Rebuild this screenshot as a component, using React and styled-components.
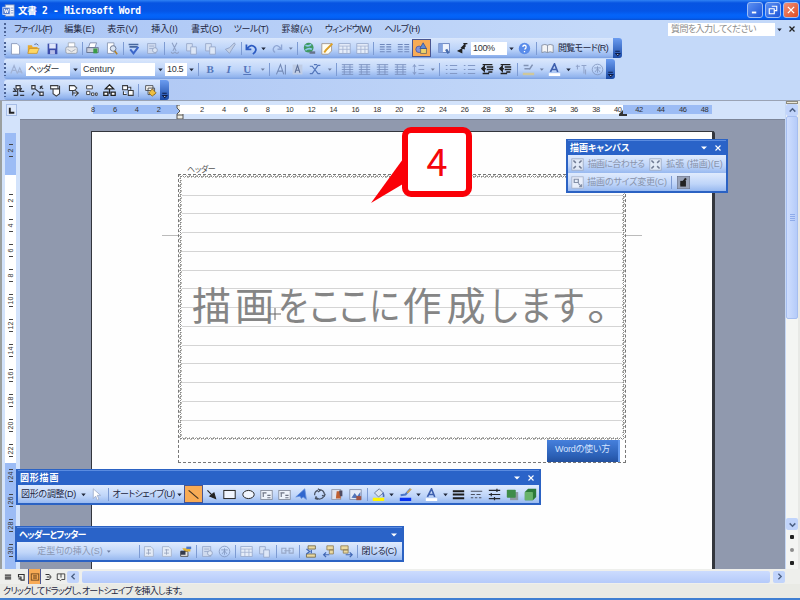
import React from "react";
import styled, { createGlobalStyle } from "styled-components";

const GlobalStyle = createGlobalStyle`
  body {
    margin: 0;
    overflow: hidden;
    font-family: "Liberation Sans", "Noto Sans CJK JP", sans-serif;
  }
  * {
    box-sizing: border-box;
  }
`;

const Window = styled.div`
  width: 800px;
  height: 600px;
  display: flex;
  flex-direction: column;
  background: #c3d8f8;
  border-bottom: 2px solid #3f7fd2;
  overflow: hidden;
`;

const TitleBar = styled.div`
  height: 20px;
  flex: none;
  display: flex;
  align-items: center;
  padding: 0 1px 0 2px;
  background: linear-gradient(#2f82f4 0, #0754e2 3px, #0555e6 11px, #0464fa 15px, #0360f5 18px, #0a4fd0 20px);
`;
const TitleText = styled.div`
  flex: 1;
  margin-left: 3px;
  color: #fff;
  font-family: "DejaVu Sans Mono", "Noto Sans CJK JP", monospace;
  font-size: 9.6px;
  font-weight: bold;
  letter-spacing: -0.3px;
  white-space: pre;
`;
const WinButton = styled.div`
  width: 16px;
  height: 16px;
  margin-left: 2px;
  display: flex;
  align-items: center;
  justify-content: center;
  border: 1px solid #9dbdf5;
  border-radius: 3px;
  background: ${(props) => (props.$close ? "linear-gradient(135deg, #f0917a, #dd4b22)" : "linear-gradient(135deg, #5c90f2, #1c55d8)")};
`;

const MenuBar = styled.div`
  height: 18px;
  flex: none;
  display: flex;
  align-items: center;
  padding: 0 4px;
  background: linear-gradient(90deg, #aac5f5, #c4d9f9 75%);
`;
const Label = styled.div`
  width: ${(props) => props.$w}px;
  flex: none;
  display: flex;
  justify-content: ${(props) => (props.$left ? "flex-start" : "center")};
  color: ${(props) => props.$color || "#1d2640"};
  font-size: ${(props) => props.$size || 9}px;
  font-weight: ${(props) => (props.$bold ? "bold" : "normal")};
  letter-spacing: ${(props) => props.$ls || 0}px;
  font-feature-settings: "palt";
  line-height: 14px;
  white-space: pre;
`;
const Question = styled.div`
  width: 107px;
  height: 13px;
  padding-left: 3px;
  background: #fff;
  color: #8c8c8c;
  font-size: 9px;
  letter-spacing: -0.6px;
  line-height: 12px;
  white-space: nowrap;
  font-feature-settings: "palt";
`;

const Docks = styled.div`
  height: 63px;
  flex: none;
  display: flex;
  flex-direction: column;
  align-items: flex-start;
  gap: 1px;
  padding-left: 4px;
  background: linear-gradient(90deg, #abc4f3, #c4d9f9 75%);
  border-bottom: 1px solid #9aa3b4;
`;
const Strip = styled.div`
  height: 20px;
  display: flex;
  align-items: center;
  border-radius: 3px;
  background: linear-gradient(#dae7fc, #bdd4f9 55%, #92b4ee 90%, #7a9fe0);
`;
const Cell = styled.div`
  width: ${(props) => props.$w}px;
  height: ${(props) => (props.$on ? "18px" : "auto")};
  flex: none;
  display: flex;
  align-items: center;
  justify-content: center;
  background: ${(props) => (props.$on ? "#f8ab55" : "none")};
  border: ${(props) => (props.$on ? "1px solid #4a5590" : "none")};
`;
const Grip = styled.div`
  width: 2px;
  height: 13px;
  flex: none;
  background: repeating-linear-gradient(#4c6395 0 2px, transparent 2px 4px);
`;
const EndCap = styled.div`
  width: 9px;
  height: 20px;
  margin-left: ${(props) => props.$gap || 0}px;
  display: flex;
  align-items: flex-end;
  justify-content: center;
  border-radius: 0 3px 3px 0;
  background: linear-gradient(#6b9cf0, #1b4aa6);
`;
const Combo = styled.div`
  width: ${(props) => props.$w}px;
  height: 13px;
  flex: none;
  padding-left: 2px;
  background: #fff;
  color: #30343c;
  font-size: 9px;
  letter-spacing: ${(props) => props.$ls || 0}px;
  line-height: 12px;
  white-space: nowrap;
  font-feature-settings: "palt";
`;

const Middle = styled.div`
  flex: 1;
  min-height: 0;
  display: flex;
`;
const LeftColumn = styled.div`
  width: 20px;
  flex: none;
  display: flex;
  flex-direction: column;
  padding-left: 5px;
  background: #d3e3fb;
  border-left: 2px solid #9ba09f;
`;
const TabStop = styled.div`
  width: 11px;
  height: 12px;
  margin: 3px 0 17px -1px;
  display: flex;
  align-items: center;
  justify-content: center;
  background: #dce8fb;
  border: 1px solid #a6bde6;
`;
const VRuler = styled.div`
  width: 11px;
  height: ${(props) => props.$h}px;
  margin-left: -2px;
  flex: none;
  padding-top: ${(props) => props.$pad || 0}px;
  overflow: hidden;
  background: ${(props) => (props.$margin ? "#9cbcf5" : "#fff")};
`;
const VMark = styled.div`
  height: 25px;
  display: flex;
  flex-direction: column;
  align-items: center;
  justify-content: center;
  gap: 1px;
  color: #333;
  font-size: 7px;
  span {
    width: 9px;
    height: 9px;
    line-height: 9px;
    text-align: center;
    transform: rotate(-90deg);
  }
  i {
    width: 4px;
    height: 1px;
    background: #444;
  }
`;

const Center = styled.div`
  width: 765px;
  flex: none;
  display: flex;
  flex-direction: column;
`;
const HRulerBar = styled.div`
  height: 18px;
  flex: none;
  display: flex;
  padding: 4px 0 0 73px;
  background: #d3e3fb;
`;
const HRuler = styled.div`
  width: ${(props) => props.$w}px;
  height: 9px;
  flex: none;
  display: flex;
  padding-left: ${(props) => props.$pad || 0}px;
  background: ${(props) => (props.$margin ? "#9cbcf5" : "#fff")};
`;
const HMark = styled.div`
  width: 21.9px;
  flex: none;
  margin-left: ${(props) => props.$shift || 0}px;
  color: #333;
  font-size: 7.5px;
  letter-spacing: -0.4px;
  line-height: 10px;
  text-align: center;
`;
const RulerPin = styled.div`
  width: 0;
  height: 14px;
  display: flex;
  justify-content: center;
  svg {
    flex: none;
  }
`;

const Workspace = styled.div`
  flex: 1;
  position: relative;
  padding: 11px 0 0 71px;
  background: #9099ae;
  border-top: 1px solid #7c8598;
`;
const Page = styled.div`
  width: 624px;
  height: 438px;
  padding: 33px 70px 0;
  background: #fefefe;
  border: solid #33363d;
  border-width: 1px 3px 0 1px;
  border-radius: 0 3px 0 0;
`;
const HeaderTag = styled.div`
  height: 9px;
  padding-left: 25px;
  color: #555;
  font-size: 8px;
  letter-spacing: -0.3px;
  line-height: 10px;
  font-feature-settings: "palt";
`;
const MarginRow = styled.div`
  display: flex;
  align-items: flex-start;
`;
const MarginTick = styled.div`
  width: 17px;
  height: 1px;
  margin-top: 61px;
  background: #bbb;
`;
const HeaderBox = styled.div`
  width: 448px;
  height: 289px;
  flex: none;
  border: 1px dashed #777;
`;
const DrawCanvas = styled.div`
  height: 265px;
  padding: 17px 0 0;
  display: flex;
  flex-direction: column;
  border: 3px solid #c8c8c4;
  border-image: repeating-linear-gradient(135deg, #b9b9b5 0 1px, #fff 1px 2.5px) 3;
  background: repeating-linear-gradient(transparent 0 17.6px, #d4d4d4 17.6px 18.75px);
  background-position: 0 -1px;
  outline: 1px dotted #888;
  outline-offset: -2px;
`;
const Message = styled.div`
  height: 48px;
  margin: 84px 0 0 8px;
  display: flex;
  align-items: center;
  color: #858585;
  font-family: "Noto Sans CJK JP", sans-serif;
  font-size: 39px;
  font-feature-settings: "palt";
  line-height: 48px;
`;
const Glyph = styled.span`
  width: ${(props) => props.$w}px;
  flex: none;
  display: flex;
  justify-content: center;
  transform: scaleX(${(props) => props.$sx || 1});
`;
const GuideButton = styled.div`
  width: 73px;
  height: 22px;
  margin: 0 0 0 368px;
  color: #d5e4ff;
  background: linear-gradient(#4680dc, #2c61b7 70%, #2351a0);
  border-right: 2px solid #629af0;
  font-size: 9px;
  letter-spacing: -0.2px;
  line-height: 18px;
  text-align: center;
  font-feature-settings: "palt";
`;

const Callout = styled.div`
  position: absolute;
  left: 350px;
  top: 7px;
  width: 104px;
  height: 80px;
  display: flex;
  padding-left: 32px;
`;
const CalloutTail = styled.svg`
  position: absolute;
  left: 0;
  top: 30px;
`;
const CalloutBox = styled.div`
  width: 70px;
  height: 70px;
  background: #fff;
  border: 6px solid #fa0007;
  border-radius: 9px;
  color: #f5060b;
  font-family: "Noto Sans CJK JP", sans-serif;
  font-size: 38px;
  line-height: 53px;
  text-align: center;
`;
const CrossHair = styled.svg`
  position: absolute;
  left: 249px;
  top: 188px;
`;

const Floating = styled.div`
  position: absolute;
  left: ${(props) => props.$x}px;
  top: ${(props) => props.$y}px;
  width: ${(props) => props.$w}px;
  border: 2px solid #2b62c3;
  border-top-width: 1px;
`;
const FloatTitle = styled.div`
  height: 15px;
  display: flex;
  align-items: center;
  padding: 0 4px 0 2px;
  background: #2a63c8;
  border-top: 1px solid #5a8be0;
  svg {
    margin-left: 6px;
  }
`;
const Grow = styled.div`
  flex: 1;
`;
const FloatRow = styled.div`
  height: ${(props) => props.$h || 18}px;
  display: flex;
  align-items: center;
  background: linear-gradient(#e0ebfd, #bfd5f9 60%, #98b9f0);
`;

const RightColumn = styled.div`
  width: 15px;
  flex: none;
  display: flex;
  flex-direction: column;
  align-items: center;
  background: #f4f5f3;
  border-left: 1px solid #c6d8f5;
  border-right: 2px solid #e8e9e6;
`;
const SplitBar = styled.div`
  width: 12px;
  height: 3px;
  background: #e9e6d8;
  border: 1px solid #8e8b7e;
`;
const ScrollButton = styled.div`
  width: 12px;
  height: 12px;
  flex: none;
  display: flex;
  align-items: center;
  justify-content: center;
  background: #c1d4fb;
  border-radius: 2px;
`;
const VThumb = styled.div`
  width: 12px;
  height: 203px;
  display: flex;
  align-items: center;
  justify-content: center;
  background: linear-gradient(90deg, #cfdefe, #b5cbf9);
  border: 1px solid #a6bef0;
  border-radius: 2px;
`;
const ThumbGrip = styled.div`
  width: 5px;
  height: 7px;
  background: repeating-linear-gradient(#8fabea 0 1px, transparent 1px 2px);
`;
const VTrack = styled.div`
  flex: 1;
`;
const BrowseDot = styled.div`
  width: 4px;
  height: 4px;
  margin: 4.5px 0;
  border-radius: ${(props) => (props.$round ? "50%" : "1px")};
  background: ${(props) => (props.$round ? "#8d8d8d" : "#222")};
`;

const BottomBar = styled.div`
  height: 15px;
  flex: none;
  display: flex;
  align-items: center;
  background: #eeefec;
`;
const HThumb = styled.div`
  width: 688px;
  height: 12px;
  margin: 0 3px;
  background: linear-gradient(#ccdcfe, #b4cafa);
  border-radius: 2px;
`;
const StatusBar = styled.div`
  height: 14px;
  flex: none;
  display: flex;
  align-items: center;
  padding-left: 3px;
  background: #e9eae5;
`;

const drawings = {
  word: (
    <>
      <rect x="4" y="1" width="11" height="14" fill="#f3f6fd" stroke="#6b83b8" />
      <rect x="1" y="4" width="9" height="9" fill="#4f79cf" stroke="#dfe8fa" />
      <path d="M3 6l1.3 5 1.2-4 1.2 4L8 6" fill="none" stroke="#fff" strokeWidth="1.2" />
      <path d="M11 5h3M11 8h3M11 11h3" stroke="#7792cc" />
    </>
  ),
  page: <path d="M3 2h7l3 3v10H3z" fill="#fff" stroke="#8090b4" />,
  folder: (
    <>
      <path d="M1 4h5l1 2h6v8H1z" fill="#e8a92e" />
      <path d="M3 8h12l-3 6H1z" fill="#ffd763" stroke="#ab7920" strokeWidth=".6" />
      <path d="M9 3q3-2 5 1" stroke="#475b87" fill="none" />
    </>
  ),
  disk: (
    <>
      <rect x="2" y="2" width="12" height="13" fill="#3c4dab" />
      <rect x="4" y="2" width="8" height="6" fill="#dfe6fb" />
      <rect x="5" y="10" width="6" height="5" fill="#b5bde8" />
    </>
  ),
  mail: (
    <>
      <path d="M4 1h8v6H4z" fill="#fff" stroke="#a0a7b4" />
      <rect x="1" y="6" width="14" height="8" rx="2" fill="#e9eaec" stroke="#8f97a6" />
      <path d="M3 9l5 3 5-3" fill="none" stroke="#9ea5b3" />
    </>
  ),
  printer: (
    <>
      <path d="M5 1h8l-2 6H3z" fill="#fff" stroke="#7583a6" />
      <rect x="1" y="7" width="14" height="6" fill="#c9ceda" stroke="#5b6784" />
      <rect x="9" y="8" width="5" height="6" fill="#3a9b46" />
    </>
  ),
  preview: (
    <>
      <path d="M3 1h8v13H3z" fill="#fff" stroke="#8491ae" />
      <circle cx="10" cy="8" r="3.5" fill="#dbe6f5" stroke="#59647e" />
      <path d="M12 11l3 4" stroke="#b28227" strokeWidth="2" />
    </>
  ),
  spell: (
    <>
      <path d="M2 3h12M3 6h10" stroke="#46679f" strokeWidth="2" />
      <path d="M4 9l4 5 6-8" fill="none" stroke="#3b66ca" strokeWidth="2.4" />
    </>
  ),
  grayDoc: (
    <>
      <rect x="2" y="2" width="10" height="12" fill="#cfdaee" stroke="#98a9ca" />
      <path d="M4 5h6M4 8h6" stroke="#98a9ca" />
      <circle cx="11" cy="10" r="3" fill="#dbe5f5" stroke="#8f9fbf" />
    </>
  ),
  cut: <path d="M5 1l5 10M11 1L6 11M4 12a2 2 0 104 0M9 12a2 2 0 104 0" fill="none" stroke="#8ea0c4" strokeWidth="1.3" />,
  copy: (
    <>
      <path d="M2 2h7v9H2z" fill="#d6e1f4" stroke="#93a4c6" />
      <path d="M7 6h7v9H7z" fill="#dde7f7" stroke="#93a4c6" />
    </>
  ),
  brush: <path d="M14 1L8 7l-5 2 5 5 3-5 4-6z" fill="#c4d0e5" stroke="#8b9dc0" />,
  undo: <path d="M3 3v6h6M4 8q5-6 9-2t-2 9" fill="none" stroke="#2c5bc2" strokeWidth="2.2" />,
  redo: <path d="M13 3v6H8M12 8Q7 2 4 6t1 7" fill="none" stroke="#8fa6d4" strokeWidth="1.7" />,
  globe: (
    <>
      <circle cx="7" cy="7" r="6" fill="#3f9a62" />
      <path d="M3 4q4 2 7-1M3 10q4-3 8-1" stroke="#8fc8ea" strokeWidth="2" fill="none" />
      <path d="M8 13h7" stroke="#66728c" strokeWidth="3" />
    </>
  ),
  pencilTable: (
    <>
      <path d="M1 2h12v9l-4 4H1z" fill="#fffdf2" stroke="#9b8f85" />
      <path d="M14 2L6 10l-2 3" stroke="#dda026" strokeWidth="2.4" />
    </>
  ),
  table: (
    <>
      <rect x="1" y="2" width="14" height="12" fill="#e6edf9" stroke="#96a7ca" />
      <path d="M1 5h14M1 9h14M6 5v9M11 5v9" stroke="#a4b3d1" />
    </>
  ),
  columns: (
    <>
      <path d="M1 3h6M1 6h6M1 9h6M1 12h6M9 3h6M9 6h6M9 9h6M9 12h6" stroke="#6f87bb" strokeWidth="1.3" />
    </>
  ),
  drawing: (
    <>
      <circle cx="5" cy="9" r="4" fill="#8293d8" stroke="#4c56a0" />
      <rect x="7" y="8" width="7" height="6" fill="#eed26a" stroke="#6c6a63" />
      <path d="M10 1l4 7H6z" fill="#608bd2" stroke="#38539b" />
    </>
  ),
  docMap: (
    <>
      <rect x="1" y="2" width="13" height="11" fill="#eff4fd" stroke="#5a76b6" />
      <rect x="1" y="2" width="5" height="11" fill="#84a3df" />
      <path d="M10 9l3 5" stroke="#456aac" strokeWidth="3" />
    </>
  ),
  mark: <path d="M9 2h5M11 2v4M7 7l3-3v4zM3 11l4-2v4z" stroke="#222" strokeWidth="1.6" fill="#222" />,
  help: (
    <>
      <circle cx="8" cy="8" r="7" fill="#5a8cea" />
      <path d="M6 6q0-2 2-2t2 2-2 3M8 11v1.6" stroke="#fff" strokeWidth="1.6" fill="none" />
    </>
  ),
  book: <path d="M1 4q4-2 7 0 3-2 7 0v9q-4-2-7 0-3-2-7 0zM8 4v9" fill="#f3f4f6" stroke="#7e879a" />,
  style: <path d="M1 13L5 3l4 10M3 9h5M9 13l3-7 3 7M10 11h4" fill="none" stroke="#a0b1d3" strokeWidth="1.4" />,
  shadedA: (
    <>
      <rect x="2" y="2" width="12" height="12" fill="#bfcce4" />
      <path d="M5 12l3-9 3 9M6 9h4" fill="none" stroke="#5c6f97" strokeWidth="1.3" />
    </>
  ),
  plainA: <path d="M3 14L8 2l4 12M5 10h6M14 2v12" fill="none" stroke="#7389b5" strokeWidth="1.3" />,
  cross: <path d="M1 4h3l7 9h3M14 3h-3L4 13H1M6 2h4" fill="none" stroke="#5577bb" strokeWidth="1.5" />,
  align: <path d="M1 2h14M1 5h14M1 8h14M1 11h14M1 14h14M4 2v12M11 2v12" stroke="#7b91bf" strokeWidth="1.1" />,
  spacing: <path d="M3 2v12M1 5l2-3 2 3M1 11l2 3 2-3M8 3h7M8 8h7M8 13h7" fill="none" stroke="#7f94c0" />,
  list: <path d="M1 3h2M1 8h2M1 13h2M6 3h9M6 8h9M6 13h9" stroke="#8399c6" strokeWidth="1.3" />,
  indent: <path d="M2 2h12M7 5h8M7 8h8M2 13h8M1 7h5M4 4v6l-3-3zM9 11h5" fill="#222" stroke="#222" strokeWidth="1.7" />,
  highlight: (
    <>
      <path d="M2 3h6M3 7h6M9 8l4-6" stroke="#8092b4" strokeWidth="1.8" />
      <rect x="1" y="12" width="14" height="3" fill="#cfc79b" />
    </>
  ),
  fontA: (
    <>
      <path d="M3 11L8 1l4 10M5 8h6" fill="none" stroke="#3d5fae" strokeWidth="2" />
      <rect x="1" y="12.5" width="14" height="3.5" fill="#fff" />
    </>
  ),
  ruby: <path d="M1 4h5M3 2v6M8 3h6M11 3v10M13 8v6" fill="none" stroke="#91a4cb" strokeWidth="1.3" />,
  enclose: (
    <>
      <circle cx="8" cy="8" r="6.5" fill="none" stroke="#8196bf" />
      <path d="M4 6h8M8 4v8M5 11l3-4 3 4" fill="none" stroke="#8196bf" />
    </>
  ),
  shapeTree: <path d="M5 2h5v4H5zM1 9h5M10 9h5M7 6v8M2 14h5M10 14h5M2 5l3 4M12 5l-3 4" fill="#fff" stroke="#30343e" strokeWidth="1.4" />,
  shapeLink: <path d="M1 2h4v4H1zM11 10h4v4h-4zM5 6l6 5M14 2l-3 4M4 10l-3 4M11 3l4 3" fill="#fff" stroke="#30343e" strokeWidth="1.4" />,
  shapeHand: <path d="M2 2h9v4H2zM5 6v6l4 3 4-3V6zM13 2v5" fill="#fff" stroke="#3a3c40" strokeWidth="1.3" />,
  shapeRoll: <path d="M3 2h6l3 3-3 3H3zM7 8v6M7 11h7M10 8l4 3-4 4" fill="#fff" stroke="#3a3c40" strokeWidth="1.3" />,
  shapeStack: <path d="M2 2h7v4H2zM2 9h4v4H2zM8 11h3v3H8zM13 11h2v3h-2z" fill="#fff" stroke="#44464c" strokeWidth="1.2" />,
  shapeUp: <path d="M8 1l5 5H3zM8 6v6M1 10h5v4H1zM10 10h5v4h-5z" fill="#fff" stroke="#222" strokeWidth="1.6" />,
  shapeSwap: <path d="M2 2h6v5H2zM9 8h6v6H9zM8 4h4v3M3 9v4h4" fill="#fff" stroke="#3a3c40" strokeWidth="1.3" />,
  shapeGold: (
    <>
      <path d="M2 2h9v6H2zM5 5h8v8H5z" fill="#f6f6f4" stroke="#3a3c40" />
      <path d="M10 6l5 5-5 4-4-4z" fill="#eebf40" stroke="#8a6920" />
    </>
  ),
  cursor: <path d="M4 1v12l3-3 2 5 2-1-2-5h4z" fill="#fff" stroke="#9ba9c6" />,
  line: <path d="M2 3l12 10" stroke="#3c2d20" strokeWidth="1.4" />,
  arrow: <path d="M3 3l6 6M13 13L6 10l5-4z" stroke="#222" strokeWidth="1.4" fill="#222" />,
  rect: <rect x="1" y="3" width="14" height="10" fill="#f0f5fe" stroke="#222" strokeWidth="1.2" />,
  oval: <ellipse cx="8" cy="8" rx="7" ry="5" fill="#f0f5fe" stroke="#222" strokeWidth="1.2" />,
  textBox: (
    <>
      <rect x="1" y="3" width="14" height="11" fill="#eef3fb" stroke="#7d8492" />
      <path d="M3 6h5M4 6v5M9 9h4M9 12h4" stroke="#6d7484" strokeWidth="1.4" />
    </>
  ),
  pageNumber: (
    <>
      <path d="M3 2h8l3 3v9H3z" fill="#e4ebf6" stroke="#a3b0c8" />
      <path d="M6 6h5M8 5v7M5 10h6" stroke="#96a3bb" />
    </>
  ),
  wordArt: <path d="M1 11L12 1l2 13-4-3-2 2-2-3z" fill="#2f66ce" stroke="#6490dc" />,
  diagram: <path d="M8 2a6 6 0 016 6M13 11a6 6 0 01-9 1M2 9a6 6 0 014-6M6 1l3 2-3 2M15 7l-1 3-3-1M6 14l-3-1 1-3" fill="none" stroke="#475162" strokeWidth="1.5" />,
  clip: (
    <>
      <rect x="1" y="2" width="11" height="12" fill="#dfe4ee" stroke="#8b93a5" />
      <path d="M7 4h5v9H6z" fill="#c06030" />
      <path d="M10 3h4v7h-3z" fill="#4f4a60" />
    </>
  ),
  picture: (
    <>
      <rect x="1" y="2" width="14" height="12" fill="#e4ebf8" stroke="#7d8aa8" />
      <path d="M3 12l4-6 3 4 4-5v8z" fill="#5375ba" />
      <rect x="9" y="10" width="6" height="5" fill="#a35443" />
    </>
  ),
  fill: (
    <>
      <path d="M3 6l6-5 5 5-6 5z" fill="#dce4f0" stroke="#5b6c8f" />
      <path d="M13 6q2 2 1 5" stroke="#4d6cb7" strokeWidth="2" fill="none" />
      <rect x="1" y="12" width="14" height="4" fill="#fff500" />
    </>
  ),
  lineColor: (
    <>
      <path d="M2 9l6-1 6-7" stroke="#4c77c8" strokeWidth="2.5" fill="none" />
      <path d="M10 6l5-5" stroke="#caa659" strokeWidth="2" />
      <rect x="1" y="12" width="14" height="4" fill="#0632f2" />
    </>
  ),
  weights: <path d="M1 4h14M1 8h14M1 12.5h14" stroke="#1c1c1c" strokeWidth="2.4" />,
  dashes: <path d="M1 4h14M1 8h5M8 8h5M1 12h3M6 12h3M11 12h3" stroke="#4c5262" strokeWidth="1.3" />,
  linkPrev: <path d="M1 4h5v6H1zM10 4h5v6h-5zM4 7h8" fill="none" stroke="#97a7c6" strokeWidth="1.3" />,
  arrows: <path d="M1 3h14M1 8h14M1 13h14M11 1v4M4 6v4M8 11v4" stroke="#25272d" strokeWidth="1.5" />,
  shadow: (
    <>
      <rect x="5" y="5" width="10" height="10" fill="#8d99a3" />
      <rect x="1" y="2" width="11" height="10" rx="1" fill="#3f8c49" />
    </>
  ),
  cube: (
    <>
      <path d="M5 1h10v10l-4 4H1V5z" fill="#2c7b39" />
      <rect x="1" y="5" width="10" height="10" rx="1" fill="#68b36a" />
    </>
  ),
  pageSetup: (
    <>
      <path d="M2 8h9v6H2z" fill="#e4e4e4" stroke="#444" />
      <path d="M4 4h10v4H7z" fill="#e2b336" />
      <path d="M2 7h6v5H2z" fill="#333a4b" />
      <path d="M9 2h6v3H9z" fill="#4a78cb" />
    </>
  ),
  switchHeader: (
    <>
      <path d="M5 1h9v4H5zM3 11h11v4H3z" fill="#ead9a0" stroke="#6b6248" />
      <path d="M3 5l4 3-4 3M9 6v4" fill="none" stroke="#4167b4" strokeWidth="1.5" />
    </>
  ),
  prevHeader: (
    <>
      <path d="M6 1h8v5H6zM9 6h5v5H9z" fill="#ead9a0" stroke="#8a7b55" />
      <path d="M9 12H2M5 9l-3 3 3 3" fill="none" stroke="#4167b4" strokeWidth="1.5" />
    </>
  ),
  nextHeader: (
    <>
      <path d="M1 1h9v5H1zM4 6h6v4H4z" fill="#ead9a0" stroke="#8a7b55" />
      <path d="M7 12h8M12 9l3 3-3 3" fill="none" stroke="#4167b4" strokeWidth="1.5" />
    </>
  ),
  fit: (
    <>
      <rect x="1" y="1" width="14" height="14" fill="#e2eaf7" stroke="#9ba8c1" />
      <path d="M3 3l3 3M13 3l-3 3M3 13l3-3M13 13l-3-3" stroke="#6f7a92" strokeWidth="1.8" />
    </>
  ),
  resize: (
    <>
      <rect x="1" y="1" width="14" height="14" fill="#e8eefa" stroke="#a3afc6" />
      <path d="M4 8V4h5v4zM9 9l4 4M13 10v3h-3" fill="none" stroke="#8490a8" strokeWidth="1.5" />
    </>
  ),
  wrap: (
    <>
      <rect x="0" y="0" width="16" height="16" fill="#99a3b8" stroke="#5b6681" />
      <path d="M4 6h7v7H4z" fill="#222" />
      <path d="M5 11l6-8" stroke="#222" strokeWidth="2.5" />
    </>
  ),
  normal: <path d="M3 5h10M3 8h10M3 11h10" stroke="#333" strokeWidth="2" />,
  web: <path d="M4 4h9v9H8V8H4zM4 11h3" fill="none" stroke="#333" strokeWidth="1.8" />,
  layout: (
    <>
      <rect x="2" y="3" width="12" height="10" fill="none" stroke="#6b451e" strokeWidth="1.4" />
      <path d="M5 6h6M5 8h6M5 10h6" stroke="#6b451e" strokeWidth="1.3" />
    </>
  ),
  outline: <path d="M4 4h6l3 4-3 4H4M6 8h5" fill="none" stroke="#333" strokeWidth="1.6" />,
  reading: <path d="M2 3h12v9H9l-2 2-2-2H2zM8 3v6" fill="none" stroke="#333" strokeWidth="1.4" />,
  down: <path d="M4 6h8l-4 5z" fill="#20283c" />,
  downGray: <path d="M5 6h7l-3.500 4z" fill="#6c7c9f" />,
  downWhite: <path d="M2 5h12l-6 6z" fill="#fff" />,
  closeWhite: <path d="M3 3l10 10M13 3L3 13" stroke="#fff" strokeWidth="2.2" />,
  close: <path d="M3 3l10 10M13 3L3 13" stroke="#222" strokeWidth="2.6" />,
  minimize: <path d="M3 12h7" stroke="#fff" strokeWidth="3" />,
  restore: <path d="M6 2h8v7h-3M2 6h8v8H2z" fill="none" stroke="#fff" strokeWidth="1.8" />,
  chevUp: <path d="M3 10l5-5 5 5" fill="none" stroke="#4d6185" strokeWidth="2.6" />,
  chevDown: <path d="M3 6l5 5 5-5" fill="none" stroke="#4d6185" strokeWidth="2.6" />,
  chevLeft: <path d="M10 3L5 8l5 5" fill="none" stroke="#4d6185" strokeWidth="2.4" />,
  chevRight: <path d="M6 3l5 5-5 5" fill="none" stroke="#4d6185" strokeWidth="2.4" />,
  sep: <path d="M8 0v16" stroke="#7d9bd3" strokeWidth="1.3" />,
  tab: <path d="M5 3v9h8" fill="none" stroke="#222" strokeWidth="3.4" />,
  cap: <path d="M4 4h8M5 8h7l-3.500 4z" stroke="#0c1c48" strokeWidth="2" fill="#fff" />,
};

const Icon = ({ name, size = 13 }) => (
  <svg width={size} height={size} viewBox="0 0 16 16" style={{ flex: "none" }}>
    {drawings[name]}
  </svg>
);

// every entry is [icon, cell width, pressed]
const Tools = ({ items, size = 13 }) =>
  items.map(([name, w, on], index) => (
    <Cell key={index} $w={w} $on={on}>
      {name && <Icon name={name} size={name.startsWith("down") ? 9 : size} />}
    </Cell>
  ));

const Letter = styled.div`
  width: 18.5px;
  text-align: center;
  color: #5576bb;
  font-family: "Liberation Serif", serif;
  font-size: 11px;
  font-weight: bold;
  font-style: ${(props) => (props.$italic ? "italic" : "normal")};
  text-decoration: ${(props) => (props.$under ? "underline" : "none")};
`;

const menus = [
  ["ファイル(F)", 54, -0.7],
  ["編集(E)", 39, 0.1],
  ["表示(V)", 47, 0.1],
  ["挿入(I)", 37, 0],
  ["書式(O)", 47, 0],
  ["ツール(T)", 42, -0.4],
  ["罫線(A)", 50, 0.2],
  ["ウィンドウ(W)", 52, -0.8],
  ["ヘルプ(H)", 56, -0.5],
];

const standardTools = [
  ["page", 18.5], ["folder", 18.5], ["disk", 19], ["mail", 18], ["sep", 4], ["printer", 17], ["preview", 20],
  ["sep", 4], ["spell", 17], ["grayDoc", 20], ["sep", 4], ["cut", 16], ["copy", 19], ["copy", 19], ["brush", 19],
  ["sep", 4], ["undo", 15], ["down", 10], ["redo", 18], ["downGray", 8], ["sep", 6], ["globe", 18], ["pencilTable", 18],
  ["table", 17], ["table", 18], ["sep", 5], ["columns", 18], ["columns", 18], ["drawing", 19, true], ["docMap", 26],
  ["mark", 10], ["", 4],
];

const formatTools = [
  ["downGray", 11], ["sep", 4], ["plainA", 17], ["shadedA", 18], ["cross", 18], ["downGray", 9], ["sep", 5], ["align", 17],
  ["align", 18], ["align", 18], ["align", 18], ["spacing", 18], ["downGray", 9], ["sep", 6], ["list", 18], ["list", 18],
  ["indent", 18], ["indent", 18], ["sep", 5], ["highlight", 17], ["downGray", 9], ["fontA", 18], ["down", 9],
  ["ruby", 17], ["enclose", 16],
];

const canvasTools = [
  ["shapeTree", 20], ["shapeLink", 18], ["shapeHand", 18], ["shapeRoll", 18], ["shapeStack", 18], ["shapeUp", 18],
  ["shapeSwap", 18], ["sep", 5], ["shapeGold", 19],
];

const drawTools = [
  ["line", 19, true], ["arrow", 17], ["rect", 19], ["oval", 18], ["textBox", 18], ["textBox", 18], ["wordArt", 17],
  ["diagram", 18], ["clip", 18], ["picture", 18], ["sep", 6], ["fill", 17], ["down", 9], ["lineColor", 18],
  ["down", 8], ["fontA", 19], ["down", 8], ["weights", 18], ["dashes", 18], ["arrows", 18], ["shadow", 18], ["cube", 19],
];

const headerTools = [
  ["", 24], ["sep", 4], ["pageNumber", 15], ["pageNumber", 20], ["pageSetup", 18], ["sep", 4], ["grayDoc", 18],
  ["enclose", 17], ["sep", 5], ["table", 16], ["copy", 20], ["sep", 4], ["linkPrev", 19], ["sep", 4],
  ["switchHeader", 18], ["prevHeader", 18], ["nextHeader", 18], ["sep", 5],
];

const message = [
  ["描", 43], ["画", 43], ["を", 34, 0.83], ["こ", 29, 0.88], ["こ", 30, 0.88], ["に", 31, 0.8], ["作", 44],
  ["成", 44], ["し", 32, 0.82], ["ま", 31, 0.85], ["す", 35, 0.85], ["。", 23, 1.1],
];

const evens = (from, to) => {
  const out = [];
  for (let n = from; n <= to; n += 2) out.push(n);
  return out;
};

const VMarks = ({ values }) =>
  values.map((n) => (
    <VMark key={n}>
      <i />
      <span>{n}</span>
      <i />
    </VMark>
  ));

const Toolbars = () => (
  <Docks>
    <Strip>
      <Grip />
      <Tools items={standardTools} />
      <Combo $w={36} $ls={-0.3}>100%</Combo>
      <Tools items={[["down", 8], ["help", 19], ["sep", 5], ["book", 17]]} />
      <Label $w={54} $ls={-0.6}>閲覧モード(R)</Label>
      <EndCap $gap={3}><Icon name="cap" size={9} /></EndCap>
    </Strip>
    <Strip>
      <Grip />
      <Tools items={[["style", 20]]} />
      <Combo $w={44} $ls={-0.6}>ヘッダー</Combo>
      <Tools items={[["down", 11]]} />
      <Combo $w={74}>Century</Combo>
      <Tools items={[["down", 10]]} />
      <Combo $w={22} $ls={-0.3}>10.5</Combo>
      <Tools items={[["down", 9], ["sep", 5]]} />
      <Letter>B</Letter>
      <Letter $italic>I</Letter>
      <Letter $under>U</Letter>
      <Tools items={formatTools} />
      <EndCap><Icon name="cap" size={9} /></EndCap>
    </Strip>
    <Strip>
      <Grip />
      <Tools items={[["", 2], ...canvasTools]} />
      <EndCap><Icon name="cap" size={9} /></EndCap>
    </Strip>
  </Docks>
);

const CanvasPanel = () => (
  <Floating $x={546} $y={19} $w={162}>
    <FloatTitle>
      <Label $w={80} $left $bold $color="#fff" $ls={0}>描画キャンバス</Label>
      <Grow />
      <Icon name="downWhite" size={8} />
      <Icon name="closeWhite" size={8} />
    </FloatTitle>
    <FloatRow>
      <Tools items={[["fit", 18]]} />
      <Label $w={60} $ls={-0.7} $color="#8893ab">描画に合わせる</Label>
      <Tools items={[["fit", 18]]} />
      <Label $w={61} $ls={0} $color="#8893ab">拡張 (描画)(E)</Label>
    </FloatRow>
    <FloatRow>
      <Tools items={[["resize", 18]]} />
      <Label $w={82} $ls={-0.2} $color="#8893ab">描画のサイズ変更(C)</Label>
      <Tools items={[["sep", 6], ["wrap", 18]]} />
    </FloatRow>
  </Floating>
);

const DrawPanel = () => (
  <Floating $x={-4} $y={349} $w={525}>
    <FloatTitle>
      <Label $w={60} $left $bold $color="#fff" $ls={0.8}>図形描画</Label>
      <Grow />
      <Icon name="downWhite" size={8} />
      <Icon name="closeWhite" size={8} />
    </FloatTitle>
    <FloatRow>
      <Label $w={61} $ls={-0.3}>図形の調整(D)</Label>
      <Tools items={[["down", 8], ["cursor", 18], ["sep", 7]]} />
      <Label $w={63} $ls={-0.65}>オートシェイプ(U)</Label>
      <Tools items={[["down", 9], ...drawTools]} />
    </FloatRow>
  </Floating>
);

const HeaderPanel = () => (
  <Floating $x={-5} $y={406} $w={389}>
    <FloatTitle>
      <Label $w={90} $left $bold $color="#fff" $ls={-0.8}>ヘッダーとフッター</Label>
      <Grow />
      <Icon name="downWhite" size={8} />
    </FloatTitle>
    <FloatRow>
      <Tools items={[["", 20]]} />
      <Label $w={66} $ls={0} $color="#8b98b3">定型句の挿入(S)</Label>
      <Tools items={[["downGray", 10], ...headerTools]} />
      <Label $w={38} $ls={-0.4}>閉じる(C)</Label>
    </FloatRow>
  </Floating>
);

const Document = () => (
  <Page>
    <HeaderTag>ヘッダー</HeaderTag>
    <MarginRow>
      <MarginTick />
      <HeaderBox>
        <DrawCanvas>
          <Message>
            {message.map(([ch, w, sx], index) => (
              <Glyph key={index} $w={w} $sx={sx}>{ch}</Glyph>
            ))}
          </Message>
        </DrawCanvas>
        <GuideButton>Wordの使い方</GuideButton>
      </HeaderBox>
      <MarginTick />
    </MarginRow>
  </Page>
);

const App = () => {
  return (
    <>
      <GlobalStyle />
      <Window>
        <TitleBar>
          <Icon name="word" size={13} />
          <TitleText>文書 2 - Microsoft Word</TitleText>
          <WinButton><Icon name="minimize" size={10} /></WinButton>
          <WinButton><Icon name="restore" size={10} /></WinButton>
          <WinButton $close><Icon name="closeWhite" size={10} /></WinButton>
        </TitleBar>
        <MenuBar>
          <Grip />
          {menus.map(([text, w, ls]) => (
            <Label key={text} $w={w} $ls={ls}>{text}</Label>
          ))}
          <Grow />
          <Question>質問を入力してください</Question>
          <Tools items={[["down", 9], ["", 4]]} />
          <Icon name="close" size={8} />
        </MenuBar>
        <Toolbars />
        <Middle>
          <LeftColumn>
            <TabStop><Icon name="tab" size={9} /></TabStop>
            <VRuler $h={42} $pad={5} $margin><VMarks values={[2]} /></VRuler>
            <VRuler $h={288} $pad={13}><VMarks values={evens(2, 22)} /></VRuler>
            <VRuler $h={106} $margin><VMarks values={evens(24, 30)} /></VRuler>
          </LeftColumn>
          <Center>
            <HRulerBar>
              <HRuler $w={87} $margin>
                {[8, 6, 4, 2].map((n) => <HMark key={n} $shift={n === 8 ? -11 : 0}>{n}</HMark>)}
              </HRuler>
              <RulerPin>
                <svg width="8" height="16" viewBox="0 0 8 16">
                  <path d="M1 0h6v3L4 6 1 3zM4 6l3 3v5H1V9zM1 10h6" fill="#f0eee4" stroke="#555" />
                </svg>
              </RulerPin>
              <HRuler $w={443} $pad={11}>
                {evens(2, 40).map((n) => <HMark key={n}>{n}</HMark>)}
              </HRuler>
              <RulerPin>
                <svg width="8" height="12" viewBox="0 0 8 12"><path d="M4 5l4 4v2H0V9z" fill="#333" /></svg>
              </RulerPin>
              <HRuler $w={89} $pad={5} $margin>
                {evens(42, 48).map((n) => <HMark key={n}>{n}</HMark>)}
              </HRuler>
            </HRulerBar>
            <Workspace>
              <Document />
              <CrossHair width="12" height="12"><path d="M6 0v12M0 6h12" stroke="#666" /></CrossHair>
              <Callout>
                <CalloutTail width="42" height="50"><path d="M1 46L33 2l5 22z" fill="#fa0007" /></CalloutTail>
                <CalloutBox>4</CalloutBox>
              </Callout>
              <CanvasPanel />
              <DrawPanel />
              <HeaderPanel />
            </Workspace>
          </Center>
          <RightColumn>
            <SplitBar />
            <ScrollButton><Icon name="chevUp" size={9} /></ScrollButton>
            <VThumb><ThumbGrip /></VThumb>
            <VTrack />
            <ScrollButton><Icon name="chevDown" size={9} /></ScrollButton>
            <BrowseDot />
            <BrowseDot $round />
            <BrowseDot />
          </RightColumn>
        </Middle>
        <BottomBar>
          <Tools
            size={10}
            items={[["", 2], ["normal", 12], ["web", 14], ["layout", 13, true], ["outline", 13], ["reading", 13]]}
          />
          <ScrollButton><Icon name="chevLeft" size={9} /></ScrollButton>
          <HThumb />
          <ScrollButton><Icon name="chevRight" size={9} /></ScrollButton>
        </BottomBar>
        <StatusBar>
          <Label $w={190} $left $ls={-0.8}>クリックしてドラッグし、オートシェイプ を挿入します。</Label>
        </StatusBar>
      </Window>
    </>
  );
};

export default App;
